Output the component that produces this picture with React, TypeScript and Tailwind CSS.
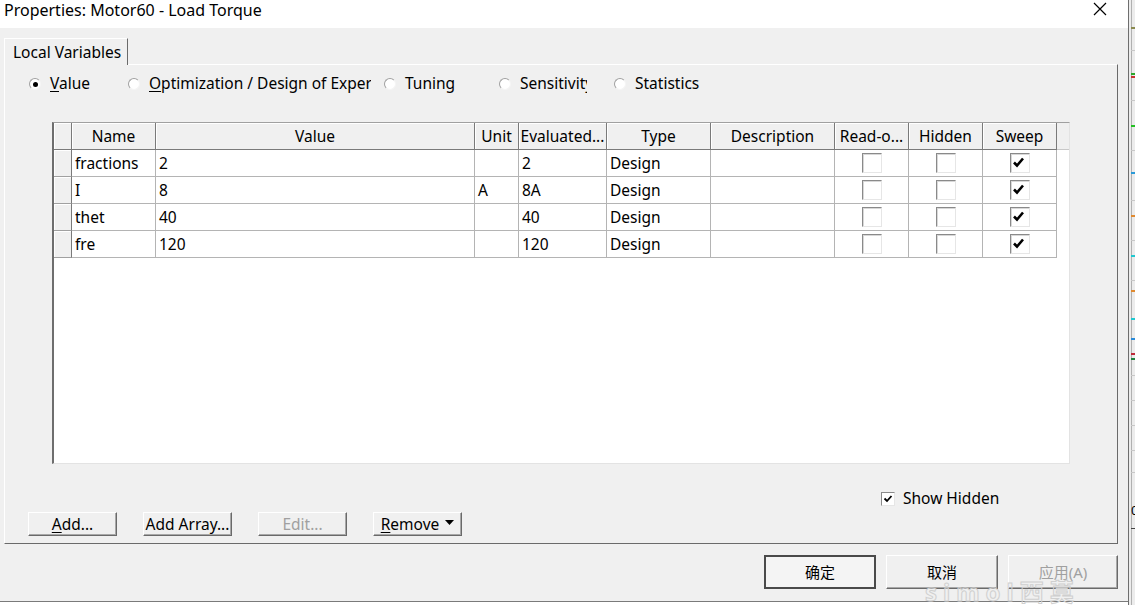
import React from "react";

const rows = [
  { name: "fractions", value: "2", unit: "", ev: "2" },
  { name: "I", value: "8", unit: "A", ev: "8A" },
  { name: "thet", value: "40", unit: "", ev: "40" },
  { name: "fre", value: "120", unit: "", ev: "120" },
];

function Radio({ checked }: { checked?: boolean }) {
  return (
    <span className="relative inline-flex w-[12px] h-[12px] rounded-full bg-white border border-t-[#a0a0a0] border-l-[#a0a0a0] border-r-[#f4f4f4] border-b-[#f4f4f4] items-center justify-center shrink-0">
      {checked && <span className="w-[5px] h-[5px] rounded-full bg-black" />}
    </span>
  );
}

function Check({ checked }: { checked?: boolean }) {
  return (
    <span className="flex w-[20px] h-[20px] bg-white border border-t-[#8a8a8a] border-l-[#8a8a8a] border-r-[#e6e6e6] border-b-[#e6e6e6] shadow-[inset_1px_1px_0_#d8d8d8]">
      {checked && (
        <svg width="18" height="18" viewBox="0 0 18 18">
          <path d="M3 8.5 L6 11.5 L12 4.5" fill="none" stroke="#000" strokeWidth="2.6" />
        </svg>
      )}
    </span>
  );
}

function Btn({ children, disabled, w = "w-[89px]" }: { children: React.ReactNode; disabled?: boolean; w?: string }) {
  return (
    <div
      className={`${w} h-[24px] flex items-center justify-center pt-[1px] bg-[#f0f0f0] border-t border-l border-t-white border-l-white border-b border-r border-b-[#6a6a6a] border-r-[#6a6a6a] shadow-[inset_-1px_-1px_0_#a8a8a8] text-[15.5px] ${
        disabled ? "text-[#a0a0a0]" : "text-black"
      }`}
    >
      {children}
    </div>
  );
}

function StripChart() {
  const ticks: [number, string][] = [
    [27, "#8a8a50"],
    [73, "#2aa82a"],
    [76, "#c83232"],
    [125, "#22c022"],
    [172, "#2a9ad8"],
    [215, "#e08a30"],
    [255, "#20c8d0"],
    [290, "#e08a30"],
    [318, "#20c8d0"],
    [338, "#2a8ad8"],
    [353, "#c02838"],
    [358, "#208040"],
  ];
  const grid = [50, 100, 150, 200, 240, 280, 375, 400, 425, 450, 472];
  return (
    <svg width="7" height="605" viewBox="0 0 7 605" className="block">
      <rect x="0" y="0" width="7" height="605" fill="#ececec" />
      <rect x="0" y="0" width="1" height="605" fill="#6e6e6e" />
      <rect x="3" y="0" width="1" height="605" fill="#b0b0b0" />
      {grid.map((y) => (
        <rect key={y} x="3" y={y} width="4" height="1" fill="#c8c8c8" />
      ))}
      {ticks.map(([y, c], i) => (
        <rect key={i} x="3" y={y} width="4" height="2" fill={c} />
      ))}
      <text x="3" y="515" fontSize="13" fill="#000" fontFamily="Noto Sans">0</text>
      <rect x="3" y="528" width="4" height="1" fill="#444" />
    </svg>
  );
}

export default function App() {
  const font = { fontFamily: '"Noto Sans", "Noto Sans CJK SC", sans-serif' };
  const cols = [84, 319, 44, 88, 104, 124, 74, 74, 74];
  const headers = ["Name", "Value", "Unit", "Evaluated...", "Type", "Description", "Read-o...", "Hidden", "Sweep"];
  return (
    <div className="flex w-[1135px] h-[605px] overflow-hidden bg-white text-black" style={font}>
      <div className="relative flex flex-col w-[1128px] h-[605px]">
        {/* title bar */}
        <div className="h-[28px] bg-white flex items-center justify-between pl-[4px] pr-[21px] shrink-0">
          <span className="text-[16px] leading-none mt-[-9px]">Properties: Motor60 - Load Torque</span>
          <svg width="14" height="14" viewBox="0 0 14 14" className="mt-[-10px]">
            <path d="M1 1 L13 13 M13 1 L1 13" stroke="#000" strokeWidth="1.2" />
          </svg>
        </div>
        {/* body */}
        <div className="flex flex-col bg-[#f0f0f0] h-[573px] px-[4px] pt-[10px] shrink-0">
          {/* tab */}
          <div className="w-[124px] h-[27px] flex items-center pl-[8px] pt-[1px] border-t border-l border-t-white border-l-white border-r border-r-[#6a6a6a] bg-[#f0f0f0] text-[15.5px] relative z-10 mb-[-1px]">
            Local Variables
          </div>
          {/* panel */}
          <div className="w-[1114px] h-[480px] flex flex-col border-t border-l border-t-white border-l-white border-r border-b border-r-[#6a6a6a] border-b-[#6a6a6a]">
            {/* radios */}
            <div className="flex items-center h-[20px] mt-[9px] pl-[24px] text-[15.5px]">
              <div className="w-[99px] flex items-center gap-[9px]">
                <Radio checked />
                <span><span className="underline underline-offset-2">V</span>alue</span>
              </div>
              <div className="w-[256px] flex items-center gap-[9px]">
                <Radio />
                <span className="w-[222px] overflow-hidden whitespace-nowrap">
                  <span className="underline underline-offset-2">O</span>ptimization / Design of Experiments
                </span>
              </div>
              <div className="w-[115px] flex items-center gap-[9px]">
                <Radio />
                <span>Tuning</span>
              </div>
              <div className="w-[115px] flex items-center gap-[9px]">
                <Radio />
                <span className="w-[67px] overflow-hidden whitespace-nowrap">Sensitivity</span>
              </div>
              <div className="flex items-center gap-[9px]">
                <Radio />
                <span>Statistics</span>
              </div>
            </div>
            {/* grid */}
            <div className="ml-[47px] mt-[28px] w-[1018px] h-[342px] bg-white flex flex-col border-l-2 border-t border-l-[#6e6e6e] border-t-[#a0a0a0] border-r border-b border-r-[#e3e3e3] border-b-[#e3e3e3] text-[15.5px]">
              {/* header */}
              <div className="flex h-[27px] bg-[#f0f0f0] shrink-0">
                <div className="w-[18px] h-full border-r border-b border-r-[#7a7a7a] border-b-[#7a7a7a] shadow-[inset_1px_1px_0_#fff]" />
                {headers.map((h, i) => (
                  <div
                    key={h}
                    style={{ width: cols[i] }}
                    className="h-full flex items-center justify-center pt-[2px] border-r border-b border-r-[#7a7a7a] border-b-[#7a7a7a] shadow-[inset_1px_1px_0_#fff] whitespace-nowrap overflow-hidden"
                  >
                    {h}
                  </div>
                ))}
                <div className="flex-1 h-full border-b border-b-[#c8c8c8]" />
              </div>
              {rows.map((r) => (
                <div key={r.name} className="flex h-[27px] shrink-0">
                  <div className="w-[18px] h-full bg-[#f0f0f0] border-r border-b border-r-[#7a7a7a] border-b-[#a0a0a0] shadow-[inset_1px_1px_0_#fff]" />
                  {[r.name, r.value, r.unit, r.ev, "Design", ""].map((t, i) => (
                    <div
                      key={i}
                      style={{ width: cols[i] }}
                      className="h-full flex items-center pl-[3px] pt-[2px] border-r border-b border-r-[#b4b4b4] border-b-[#b4b4b4] whitespace-nowrap overflow-hidden"
                    >
                      {t}
                    </div>
                  ))}
                  {[false, false, true].map((c, i) => (
                    <div
                      key={i}
                      style={{ width: cols[6 + i] }}
                      className="h-full flex items-center justify-center border-r border-b border-r-[#b4b4b4] border-b-[#b4b4b4]"
                    >
                      <Check checked={c} />
                    </div>
                  ))}
                </div>
              ))}
            </div>
            {/* show hidden */}
            <div className="flex items-center h-[17px] mt-[26px] pl-[876px] gap-[8px] text-[15.5px]">
              <span className="flex w-[14px] h-[14px] bg-white border border-t-[#8a8a8a] border-l-[#8a8a8a] border-r-[#e6e6e6] border-b-[#e6e6e6]">
                <svg width="12" height="12" viewBox="0 0 12 12">
                  <path d="M2.5 5.5 L5 8 L9.5 3" fill="none" stroke="#000" strokeWidth="1.8" />
                </svg>
              </span>
              <span className="pt-[1px]">Show Hidden</span>
            </div>
            {/* buttons */}
            <div className="flex items-center gap-[26px] mt-[5px] pl-[23px]">
              <Btn>
                <span><span className="underline underline-offset-2">A</span>dd...</span>
              </Btn>
              <Btn>Add Array...</Btn>
              <Btn disabled>Edit...</Btn>
              <Btn>
                <span className="flex items-center gap-[6px]">
                  <span><span className="underline underline-offset-2">R</span>emove</span>
                  <svg width="9" height="6" viewBox="0 0 9 6" className="mt-[-4px]">
                    <path d="M0 0 H9 L4.5 5 Z" fill="#000" />
                  </svg>
                </span>
              </Btn>
            </div>
          </div>
          {/* dialog buttons */}
          <div className="flex justify-end gap-[10px] mt-[11px] pr-[6px] text-[15px]">
            <div className="w-[112px] h-[34px] flex items-center justify-center bg-[#f4f4f4] border-2 border-[#4a4a4a]">确定</div>
            <div className="w-[112px] h-[34px] flex items-center justify-center bg-[#f0f0f0] border-t border-l border-t-white border-l-white border-b border-r border-b-[#6a6a6a] border-r-[#6a6a6a] shadow-[inset_-1px_-1px_0_#a8a8a8]">取消</div>
            <div className="w-[110px] h-[34px] flex items-center justify-center bg-[#f0f0f0] text-[#a0a0a0] border-t border-l border-t-white border-l-white border-b border-r border-b-[#6a6a6a] border-r-[#6a6a6a] shadow-[inset_-1px_-1px_0_#a8a8a8]">应用(A)</div>
          </div>
        </div>
        <div className="h-px bg-[#7a7a7a] shrink-0" />
        <div className="flex-1 bg-white" />
        {/* watermark */}
        <div className="absolute left-[925px] top-[580px] text-[24px] leading-none tracking-[6px] font-bold text-transparent [-webkit-text-stroke:1px_#cfcfcf] whitespace-nowrap pointer-events-none">
          simol西莫
        </div>
      </div>
      <StripChart />
    </div>
  );
}
